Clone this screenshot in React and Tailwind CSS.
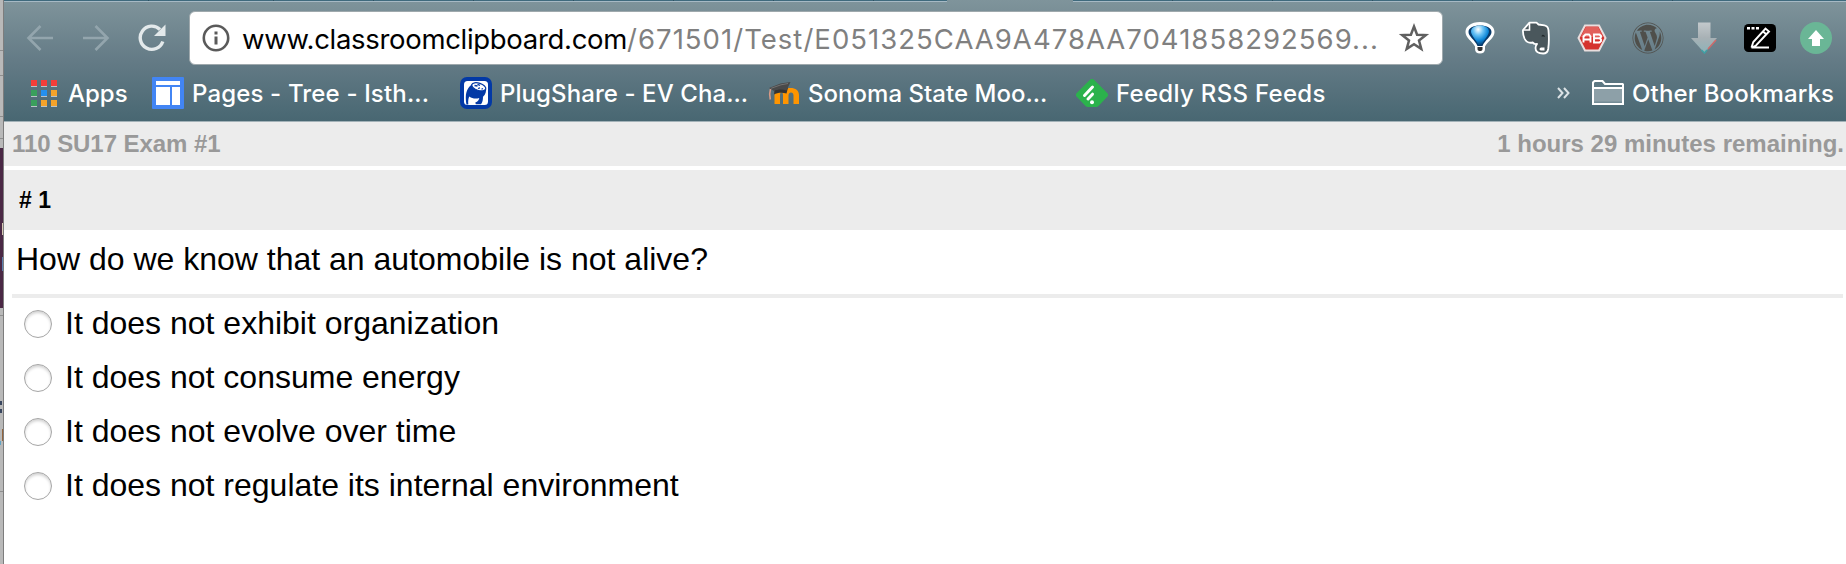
import React from "react";
import { FaWordpress } from "react-icons/fa";

const options = [
  "It does not exhibit organization",
  "It does not consume energy",
  "It does not evolve over time",
  "It does not regulate its internal environment",
];

// Thin slice of the window that sits behind the browser
function WindowBehind() {
  return (
    <div className="flex w-1 shrink-0 border-r border-[#7d7d7d] bg-[#b9b9b9]">
      <div className="flex w-full flex-col">
        <div className="h-[51px] border-b border-[#8f8f8f]" />
        <div className="h-[25px] border-b border-[#8f8f8f]" />
        <div className="h-[41px] border-b border-[#8f8f8f]" />
        <div className="h-[22px] border-b border-[#8f8f8f]" />
        <div className="h-[9px]" />
        <div className="flex h-[160px] flex-col items-end bg-[#4a2845]">
          <div className="mt-[75px] h-3 w-px bg-[#d8c9b4]" />
          <div className="mt-[22px] h-3.5 w-px bg-[#5b7fae]" />
        </div>
        <div className="h-2 border-b border-[#8f8f8f]" />
        <div className="flex h-[176px] flex-col border-b border-[#8f8f8f]">
          <div className="mt-[85px] h-1 w-0.5 bg-[#39465f]" />
          <div className="mt-1 h-1 w-0.5 bg-[#39465f]" />
          <div className="mt-4 h-3 w-px self-end bg-[#94663f]" />
          <div className="h-1 w-px bg-[#5fa3c4]" />
        </div>
      </div>
    </div>
  );
}

function BackIcon() {
  return (
    <svg width="28" height="28" viewBox="0 0 28 28" fill="none" stroke="#93a5ad" strokeWidth="2.6">
      <path d="M27 14H3M14.500 2L2.500 14l12 12" />
    </svg>
  );
}

function ForwardIcon() {
  return (
    <svg width="28" height="28" viewBox="0 0 28 28" fill="none" stroke="#93a5ad" strokeWidth="2.6">
      <path d="M1 14h24M13.500 2l12 12-12 12" />
    </svg>
  );
}

function ReloadIcon() {
  return (
    <svg width="28" height="28" viewBox="0 0 28 28">
      <path
        d="M22 5.500A11.600 11.600 0 1 0 24.800 17.500"
        fill="none"
        stroke="#e3e9eb"
        strokeWidth="3.400"
      />
      <path d="M27.500 0.500V12H16z" fill="#e3e9eb" />
    </svg>
  );
}

function InfoIcon() {
  return (
    <svg width="28" height="28" viewBox="0 0 28 28">
      <circle cx="14" cy="14" r="12.200" fill="none" stroke="#5a5a5a" strokeWidth="2.600" />
      <path d="M12.500 7.500h3v3h-3zM12.500 12.500h3v8h-3z" fill="#5a5a5a" />
    </svg>
  );
}

function StarIcon() {
  return (
    <svg width="32" height="32" viewBox="0 0 32 32">
      <path
        d="M16 4.500l3.100 8.200 8.700.4-6.800 5.400 2.300 8.400-7.300-4.700-7.300 4.700 2.300-8.400-6.800-5.400 8.700-.4z"
        fill="none"
        stroke="#5f5f5f"
        strokeWidth="2.500"
      />
    </svg>
  );
}

function AppsIcon() {
  const cells = [
    "#f43e3a", "#f43e3a", "#f43e3a",
    "#3a9f5c", "#2490ef", "#f4a32a",
    "#3a9f5c", "#f4a32a", "#f4a32a",
  ];
  return (
    <svg width="26" height="27" viewBox="0 0 26 27">
      {cells.map((color, i) => (
        <g key={i}>
          <rect x={(i % 3) * 10} y={Math.floor(i / 3) * 10} width="6" height="7" fill="#b9c3c8" />
          <rect x={(i % 3) * 10} y={Math.floor(i / 3) * 10} width="6" height="6" fill={color} />
        </g>
      ))}
    </svg>
  );
}

function PagesIcon() {
  return (
    <svg width="32" height="32" viewBox="0 0 32 32">
      <rect width="32" height="32" rx="1" fill="#4285f4" />
      <path d="M4 4h24v4H4zM4 10h14v18H4zM20 10h8v18h-8z" fill="#fff" />
    </svg>
  );
}

function PlugShareIcon() {
  return (
    <svg width="32" height="32" viewBox="0 0 32 32">
      <rect width="32" height="32" rx="7" fill="#0339a6" />
      <rect x="4" y="4" width="24" height="24" rx="3.500" fill="#fff" />
      <path
        d="M12 7C9 10 6 13 5.800 20c0 3 .2 5 .7 7.500h1.800c-.3-3.500 0-6 1-8 3 2.200 6.500 2.500 10 1.500-.5 2-1.500 3.500-4 4.500l.5 1.800H21c1.500-2 2-4.500 2-7.500C25.500 17.500 26.500 14 26 11z"
        fill="#0339a6"
      />
      <ellipse cx="18.800" cy="9.800" rx="7.300" ry="3.600" transform="rotate(18 18.800 9.800)" fill="#fff" stroke="#0339a6" strokeWidth="1.200" />
      <path d="M14.500 8.500l3 .5M17.500 7.300l2.500 1M18 11.500l2-.6M21.500 12.300l1.500-.8" stroke="#0339a6" strokeWidth="1.300" />
    </svg>
  );
}

function MoodleIcon() {
  return (
    <svg width="32" height="24" viewBox="0 0 32 24">
      <path
        d="M6.500 23V13c0-4 2.500-6 5.500-6 2 0 3.500.7 4.500 1.800C18 7.500 20 7 22.500 7c5 0 8.500 2.500 8.500 7v9h-5.500v-8.500c0-1.800-1-3-2.500-3s-2.500 1.200-2.500 3V23H15v-8.500c0-1.800-.5-3-1.500-3s-1.500 1.200-1.500 3V23z"
        fill="#ff9500"
      />
      <path d="M6.500 8.500L6 13.500c3-2 8.500-2.500 12.500-1L20 6.500z" fill="#333" />
      <path d="M1 7L12.500 2.500 22.500 1l-4 8.500C14 8 9 8.500 6 10z" fill="#494949" />
      <path d="M3 7.300L13 3.800l7-1.300" fill="none" stroke="#7c7c7c" strokeWidth="0.800" />
      <path d="M2.500 8C1.500 11 1.300 14 2.300 18.500" fill="none" stroke="#d99a86" strokeWidth="1.600" />
    </svg>
  );
}

function FeedlyIcon() {
  return (
    <svg width="32" height="28" viewBox="0 0 32 28">
      <path
        d="M13.500 1.200a3.600 3.600 0 0 1 5 0l12.500 12.500a3 3 0 0 1 0 4.400L22.500 27a3.500 3.500 0 0 1-2.500 1h-8a3.500 3.500 0 0 1-2.500-1L1 18.100a3 3 0 0 1 0-4.400z"
        fill="#2bb24c"
      />
      <path d="M8.500 16.500l8-8.500M12 20l4.500-4.800" stroke="#fff" strokeWidth="3" strokeLinecap="round" />
      <circle cx="16" cy="23.300" r="2" fill="#fff" />
    </svg>
  );
}

function FolderIcon() {
  return (
    <svg width="32" height="26" viewBox="0 0 32 26">
      <path d="M1 24V2.500L2.500 1h8l2.500 3h17.500l.5.500V24z" fill="#5d7883" stroke="#fff" strokeWidth="2" />
      <path d="M2 9h28v14H2z" fill="#8da0a8" />
      <path d="M2 21.500h28v2H2z" fill="#748c96" />
      <path d="M1 8h30M0 24h32" stroke="#fff" strokeWidth="2" />
    </svg>
  );
}

function BalloonIcon() {
  return (
    <svg width="34" height="34" viewBox="0 0 34 34">
      <defs>
        <radialGradient id="balloon" cx="0.4" cy="0.2" r="0.8">
          <stop offset="0" stopColor="#ffffff" />
          <stop offset="0.35" stopColor="#69c2f5" />
          <stop offset="0.7" stopColor="#0b84d6" />
          <stop offset="1" stopColor="#073a6b" />
        </radialGradient>
      </defs>
      <path
        d="M17 1C8 1 2.500 5.500 2.500 11c0 6 6.500 9 9.500 14.500V28c0 3 2 4.500 5 4.500s5-1.500 5-4.500v-2.500C25 20 31.500 17 31.500 11 31.500 5.500 26 1 17 1z"
        fill="#fff"
      />
      <path d="M17 4.500C10 4.500 5.500 7 5.500 11c0 4.500 6.500 8 9 14h5c2.500-6 9-9.500 9-14 0-4-4.500-6.500-11.500-6.500z" fill="#073a6b" />
      <path d="M17 4.500C11.500 4.500 8 7 8 10.500c0 4 5.500 8.500 7.500 14h3c2-5.500 7.500-10 7.500-14 0-3.500-3.500-6-9-6z" fill="url(#balloon)" />
      <path d="M14.500 26h5v2c0 1.500-1 2-2.500 2s-2.500-.5-2.500-2z" fill="#333" />
    </svg>
  );
}

// Elephant head: folded ear corner, body, eye and curled trunk
function EvernoteIcon() {
  return (
    <svg width="30" height="34" viewBox="0 0 30 34">
      <path
        d="M8.500 1.700h7l2 1.800 6 .9c2.700.5 3.700 2 4 5 .5 6 .7 12-.3 18.600-.6 3.400-2 4.500-5 4.500-4.500 0-7.700-1-7.700-5.500 0-1.800.5-3 1.500-4-1.800.3-3.500 0-4.200-1.500-4 .8-6.800-.5-8.300-4-1.200-3-1.800-5.500-1.500-8.500z"
        fill="#4a575c"
        stroke="#fff"
        strokeWidth="1.800"
        strokeLinejoin="round"
      />
      <path d="M2 9h6.500V1.700" fill="none" stroke="#fff" strokeWidth="1.600" />
      <path d="M23.500 26.500h-3.300c-2 0-2.300 3-.3 3h3.600z" fill="#fff" />
      <path d="M20.500 15.500c.3-2.400 3-2.400 3.500.5-1.300-.5-2.200-.6-3.500-.5z" fill="#20282b" />
    </svg>
  );
}

function AdblockIcon() {
  return (
    <svg width="30" height="28" viewBox="0 0 30 28">
      <path d="M8 1.500h14l6.500 12.500L22 26.500H8L1.500 14z" fill="#d5322e" stroke="#e9dede" strokeWidth="2" />
      <path d="M8.800 3h12.400l5 10H3.800z" fill="#e2605b" />
      <path
        d="M6.500 18.500v-6l2-2H12l1.500 2v6M6.500 15.500h7M17 10.500h5.500l1.500 1.500v1l-1.500 1.200L24 15.500v1.500l-1.500 1.500H17zM17 14.300h5.500"
        fill="none"
        stroke="#fff"
        strokeWidth="1.900"
      />
    </svg>
  );
}

function DownloadIcon() {
  return (
    <svg width="28" height="32" viewBox="0 0 28 32">
      <defs>
        <linearGradient id="shaft" x1="0" y1="0" x2="0" y2="1">
          <stop offset="0" stopColor="#c3c9cc" />
          <stop offset="0.5" stopColor="#a8b1b5" />
          <stop offset="1" stopColor="#8db3b8" />
        </linearGradient>
      </defs>
      <path d="M8 .5h12.500V16H27L14.500 31 1 16h7z" fill="url(#shaft)" />
      <path d="M26 18l-8 9" stroke="#d06a6a" strokeWidth="1.500" />
      <path d="M11.500 28l3 3 2.500-3" fill="none" stroke="#3fa0a5" strokeWidth="1.500" />
    </svg>
  );
}

function NoteIcon() {
  return (
    <svg width="32" height="28" viewBox="0 0 32 28">
      <rect width="32" height="28" rx="4.500" fill="#000" />
      <path d="M3 3h3v2.500H3zM7.500 3h3v2.500h-3zM12 3h3v2.500h-3z" fill="#fff" />
      <path d="M7.500 23.500l1.800-5.500L21.500 4.500l3.500 3L12 21.500l-4.500 2h17.500M19 7.500l3.500 3" fill="none" stroke="#fff" strokeWidth="1.900" />
    </svg>
  );
}

function UploadIcon() {
  return (
    <svg width="32" height="32" viewBox="0 0 32 32">
      <circle cx="16" cy="16" r="16" fill="#6ab696" />
      <path d="M16 8l8 9h-4v7h-8v-7H8z" fill="#fff" />
    </svg>
  );
}

// Bottom edge of the tab strip, broken by the active tab
function TabStrip() {
  const tab = "w-[100px] border-r border-r-[#2c5060]";
  return (
    <div className="flex h-0.5 justify-between">
      <div className="flex w-[943px] border-b border-[#a6b9c4] bg-[#3f6a7d]">
        <div className="w-[145px] border-r border-r-[#2c5060]" />
        <div className="w-[125px] border-r border-r-[#2c5060]" />
        {[1, 2, 3, 4, 5, 6].map((n) => (
          <div key={n} className={tab} />
        ))}
      </div>
      <div className="flex w-[773px] border-b border-[#a6b9c4] bg-[#3f6a7d]">
        {[1, 2, 3, 4, 5, 6].map((n) => (
          <div key={n} className={tab} />
        ))}
      </div>
    </div>
  );
}

function Bookmark({ icon, children, className }) {
  return (
    <div className={`flex shrink-0 items-center whitespace-nowrap ${className}`}>
      {icon}
      <span className="pt-0.5">{children}</span>
    </div>
  );
}

function Extensions() {
  return (
    <div className="ml-[9px] flex items-center">
      {[
        <BalloonIcon />,
        <EvernoteIcon />,
        <AdblockIcon />,
        <FaWordpress size={32} color="#4f4f4b" />,
        <DownloadIcon />,
        <NoteIcon />,
        <UploadIcon />,
      ].map((icon, i) => (
        <div key={i} className="flex w-14 justify-center">
          {icon}
        </div>
      ))}
    </div>
  );
}

export default function App() {
  return (
    <div className="flex h-[564px] w-[1846px] overflow-hidden bg-white">
      <WindowBehind />
      <div className="flex min-w-0 flex-1 flex-col">
        <header className="h-[122px] shrink-0 border-b border-[#a3b2b8] bg-linear-to-b from-[#7f949b] via-[#647b86] to-[#486772] font-['Inter',sans-serif]">
          <TabStrip />
          <div className="flex h-[72px] items-center pl-[22px]">
            <BackIcon />
            <div className="w-7" />
            <ForwardIcon />
            <div className="w-7" />
            <ReloadIcon />
            <div className="ml-[23px] flex h-[54px] w-[1254px] items-center rounded-md border border-[#9fa9ad] bg-white pl-3 text-[27.5px] whitespace-nowrap">
              <InfoIcon />
              <span className="ml-3 pt-1 tracking-[-0.31px] text-black">www.classroomclipboard.com</span>
              <span className="pt-1 tracking-[1.03px] text-[#808080]">/671501/Test/E051325CAA9A478AA7041858292569...</span>
              <div className="mr-3 ml-auto">
                <StarIcon />
              </div>
            </div>
            <Extensions />
          </div>
          <div className="flex h-[38px] items-center pl-[27px] text-[24px] font-medium text-white">
            <Bookmark icon={<AppsIcon />} className="w-[121px] gap-[11px]">Apps</Bookmark>
            <Bookmark icon={<PagesIcon />} className="w-[308px] gap-2 tracking-[0.15px]">Pages - Tree - Isth...</Bookmark>
            <Bookmark icon={<PlugShareIcon />} className="w-[308px] gap-2 tracking-[0.08px]">PlugShare - EV Cha...</Bookmark>
            <Bookmark icon={<MoodleIcon />} className="w-[308px] gap-2 tracking-[0.03px]">Sonoma State Moo...</Bookmark>
            <Bookmark icon={<FeedlyIcon />} className="w-[481px] gap-2 tracking-[0.3px]">Feedly RSS Feeds</Bookmark>
            <svg width="13" height="12" viewBox="0 0 13 12" fill="none" stroke="#dbe2e5" strokeWidth="2">
              <path d="M1 1l4.500 5L1 11M7 1l4.500 5L7 11" />
            </svg>
            <Bookmark icon={<FolderIcon />} className="ml-[22px] gap-2 tracking-[0.15px]">Other Bookmarks</Bookmark>
          </div>
        </header>

        <main className="flex flex-1 flex-col font-['Liberation_Sans',Arial,sans-serif] text-black">
          <div className="flex h-11 items-center justify-between bg-[#ececec] pr-0.5 pl-2 text-[24px] font-bold text-[#999999]">
            <span className="tracking-[-0.06px]">110 SU17 Exam #1</span>
            <span>1 hours 29 minutes remaining.</span>
          </div>
          <div className="mt-1 flex h-[60px] items-center bg-[#ececec] pl-[15px] text-[23px] font-bold">
            <span># 1</span>
          </div>
          <div className="flex h-16 items-center pb-1.5 pl-3 text-[32px]">
            <span>How do we know that an automobile is not alive?</span>
          </div>
          <div className="mr-[3px] ml-2 h-1 bg-[#ececec]" />
          <div className="flex flex-col pl-5 text-[32px]">
            {options.map((option) => (
              <label key={option} className="flex h-[54px] items-center gap-[13px] pb-0.5">
                <input
                  type="radio"
                  name="answer"
                  className="size-7 appearance-none rounded-full border border-[#a6a6a6] bg-white shadow-[inset_0_2px_3px_rgba(0,0,0,0.18)]"
                />
                <span className="pb-0.5">{option}</span>
              </label>
            ))}
          </div>
        </main>
      </div>
    </div>
  );
}
